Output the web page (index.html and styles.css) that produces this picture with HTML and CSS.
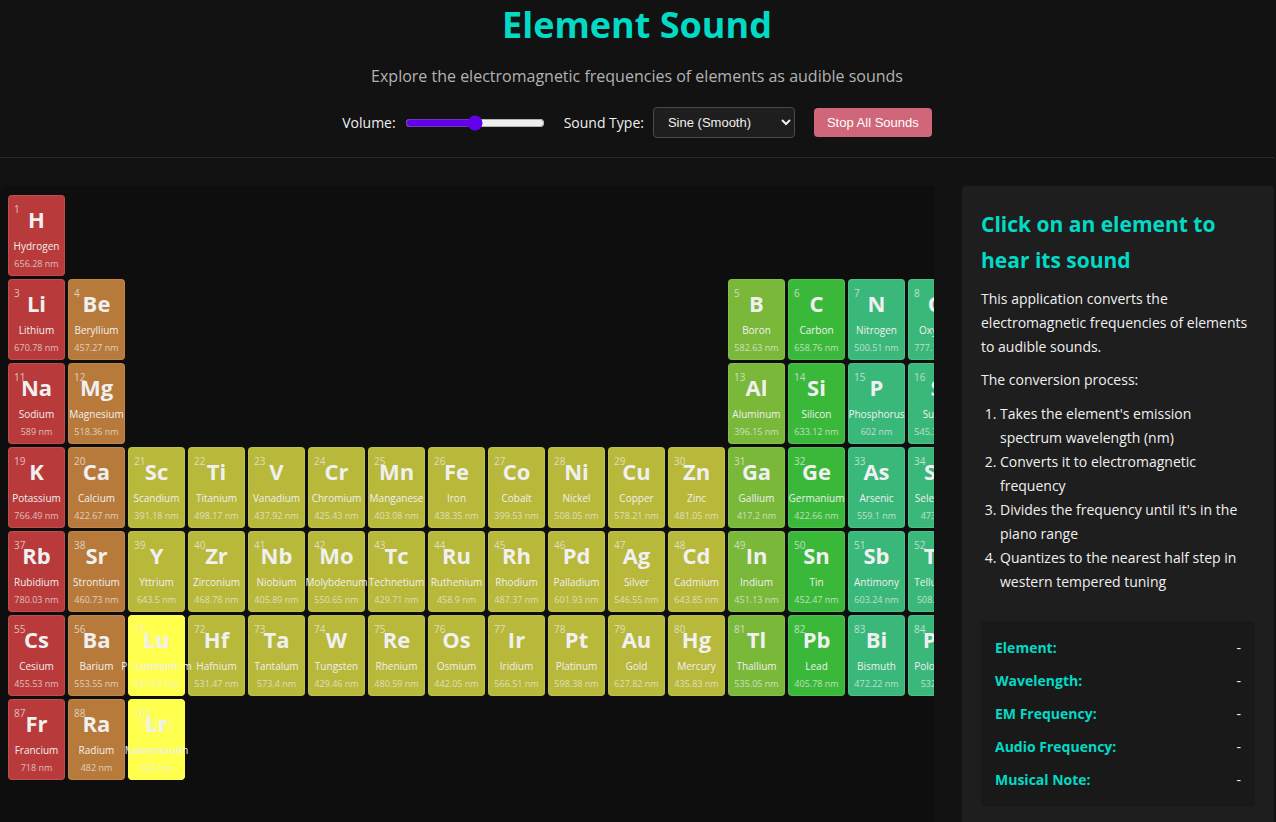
FILE: index.html
```html
<!DOCTYPE html>
<html lang="en">
<head>
<meta charset="utf-8">
<title>Element Sound</title>
<link rel="stylesheet" href="styles.css">
</head>
<body>
<header class="header">
  <h1 class="title">Element Sound</h1>
  <p class="subtitle">Explore the electromagnetic frequencies of elements as audible sounds</p>
  <div class="controls">
    <div class="control">
      <label for="volume">Volume:</label>
      <input class="volume" id="volume" type="range" min="0" max="100" value="50">
    </div>
    <div class="control">
      <label for="sound-type">Sound Type:</label>
      <select class="sound-type" id="sound-type"><option>Sine (Smooth)</option></select>
    </div>
    <button class="stop" type="button">Stop All Sounds</button>
  </div>
</header>
<main class="main">
  <section class="table-panel">
    <div class="elements" id="elements"></div>
  </section>
  <aside class="sidebar">
    <h2 class="sidebar-title">Click on an element to hear its sound</h2>
    <p class="text">This application converts the electromagnetic frequencies of elements to audible sounds.</p>
    <p class="text">The conversion process:</p>
    <ol class="steps">
      <li>Takes the element's emission spectrum wavelength (nm)</li>
      <li>Converts it to electromagnetic frequency</li>
      <li>Divides the frequency until it's in the piano range</li>
      <li>Quantizes to the nearest half step in western tempered tuning</li>
    </ol>
    <dl class="info">
      <div class="info-row"><dt>Element:</dt><dd>-</dd></div>
      <div class="info-row"><dt>Wavelength:</dt><dd>-</dd></div>
      <div class="info-row"><dt>EM Frequency:</dt><dd>-</dd></div>
      <div class="info-row"><dt>Audio Frequency:</dt><dd>-</dd></div>
      <div class="info-row"><dt>Musical Note:</dt><dd>-</dd></div>
    </dl>
  </aside>
</main>
<script src="script.js"></script>
</body>
</html>
```
FILE: styles.css
```css
* { box-sizing: border-box; }
body {
  margin: 0;
  min-height: 100vh;
  display: flex;
  flex-direction: column;
  padding-right: 2px;
  background: #121212;
  color: #f0f0f0;
  font: 14px/24px "Open Sans", "Noto Sans", sans-serif;
}
h1, h2, p, ol, dl, dd { margin: 0; }
.header {
  display: flex;
  flex-direction: column;
  align-items: center;
  padding-bottom: 19px;
  border-bottom: 1px solid #2b2b2b;
}
.title { color: #03dac6; font-size: 36px; line-height: 50px; }
.subtitle { margin: 13px 0 18px; font-size: 16px; line-height: 26px; color: #b3b3b3; }
.controls { display: flex; align-items: center; gap: 19px; }
.control { display: flex; align-items: center; gap: 9px; }
.volume { width: 140px; margin: 0; accent-color: #6200ee; }
.sound-type {
  width: 142px;
  height: 31px;
  padding: 0 0 0 10px;
  border: 1px solid #4a4a4a;
  border-radius: 4px;
  background: #1e1e1e;
  color: #f0f0f0;
  font: 13px "Liberation Sans", Arial, sans-serif;
}
.stop {
  height: 29px;
  padding: 0 13px;
  border: 0;
  border-radius: 4px;
  background: #cf6679;
  color: #fff;
  font: 13px "Liberation Sans", Arial, sans-serif;
}
.main { flex: 1; display: flex; gap: 28px; padding-top: 28px; }
.table-panel {
  flex: 1;
  min-width: 0;
  overflow: hidden;
  padding: 9px 8px;
  border-radius: 8px 0 0 0;
  background: #0e0e0e;
}
.elements {
  display: grid;
  grid-template-columns: repeat(18, 57px);
  grid-auto-rows: 81px;
  gap: 3px;
}
.cell {
  position: relative;
  display: flex;
  flex-direction: column;
  align-items: center;
  padding: 8px 0 0;
  border: 1px solid rgba(255, 255, 255, 0.1);
  border-radius: 4px;
  color: #f0f0f0;
  font: 10px/24px "Open Sans", "Noto Sans", sans-serif;
  white-space: nowrap;
  cursor: pointer;
}
.number { position: absolute; top: 4px; left: 5px; font-size: 10px; line-height: 18px; opacity: 0.7; }
.symbol { font-size: 22px; line-height: 30px; font-weight: 700; }
.wave { font-size: 9px; line-height: 12px; opacity: 0.7; }
.alkali { background-color: #b83a3a; }
.alkaline { background-color: #b87a3a; }
.transition { background-color: #b8b83a; }
.boron { background-color: #7ab83a; }
.carbon { background-color: #3ab83a; }
.nitrogen { background-color: #3ab87a; }
.series { background-color: rgba(255, 255, 77, 0.8); border-color: #ffff4d; }
.series-base { background-color: #ffff4d; border-color: #ffff4d; }
.sidebar {
  flex: 0 0 312px;
  padding: 20px 19px 15px;
  border-radius: 4px 4px 0 0;
  background: #1e1e1e;
}
.sidebar-title { margin-bottom: 9px; color: #03dac6; font-size: 21px; line-height: 36px; }
.text { margin-bottom: 9px; }
.steps { padding: 1px 0 0 19px; margin-bottom: 27px; }
.info {
  display: grid;
  gap: 9px;
  padding: 15px 14px;
  border-radius: 4px;
  background: #191919;
}
.info-row { display: flex; justify-content: space-between; }
.info-row dt { color: #03dac6; font-weight: 700; }
```
FILE: script.js
```js
const groups = {
  1: "alkali", 2: "alkaline", 13: "boron", 14: "carbon", 15: "nitrogen", 16: "nitrogen"
};

// row, column, atomic number, symbol, name, wavelength in nm, class
const elements = [
  [1, 1, 1, "H", "Hydrogen", "656.28"],
  [2, 1, 3, "Li", "Lithium", "670.78"],
  [2, 2, 4, "Be", "Beryllium", "457.27"],
  [2, 13, 5, "B", "Boron", "582.63"],
  [2, 14, 6, "C", "Carbon", "658.76"],
  [2, 15, 7, "N", "Nitrogen", "500.51"],
  [2, 16, 8, "O", "Oxygen", "777.19"],
  [3, 1, 11, "Na", "Sodium", "589"],
  [3, 2, 12, "Mg", "Magnesium", "518.36"],
  [3, 13, 13, "Al", "Aluminum", "396.15"],
  [3, 14, 14, "Si", "Silicon", "633.12"],
  [3, 15, 15, "P", "Phosphorus", "602"],
  [3, 16, 16, "S", "Sulfur", "545.38"],
  [4, 1, 19, "K", "Potassium", "766.49"],
  [4, 2, 20, "Ca", "Calcium", "422.67"],
  [4, 3, 21, "Sc", "Scandium", "391.18"],
  [4, 4, 22, "Ti", "Titanium", "498.17"],
  [4, 5, 23, "V", "Vanadium", "437.92"],
  [4, 6, 24, "Cr", "Chromium", "425.43"],
  [4, 7, 25, "Mn", "Manganese", "403.08"],
  [4, 8, 26, "Fe", "Iron", "438.35"],
  [4, 9, 27, "Co", "Cobalt", "399.53"],
  [4, 10, 28, "Ni", "Nickel", "508.05"],
  [4, 11, 29, "Cu", "Copper", "578.21"],
  [4, 12, 30, "Zn", "Zinc", "481.05"],
  [4, 13, 31, "Ga", "Gallium", "417.2"],
  [4, 14, 32, "Ge", "Germanium", "422.66"],
  [4, 15, 33, "As", "Arsenic", "559.1"],
  [4, 16, 34, "Se", "Selenium", "473"],
  [5, 1, 37, "Rb", "Rubidium", "780.03"],
  [5, 2, 38, "Sr", "Strontium", "460.73"],
  [5, 3, 39, "Y", "Yttrium", "643.5"],
  [5, 4, 40, "Zr", "Zirconium", "468.78"],
  [5, 5, 41, "Nb", "Niobium", "405.89"],
  [5, 6, 42, "Mo", "Molybdenum", "550.65"],
  [5, 7, 43, "Tc", "Technetium", "429.71"],
  [5, 8, 44, "Ru", "Ruthenium", "458.9"],
  [5, 9, 45, "Rh", "Rhodium", "487.37"],
  [5, 10, 46, "Pd", "Palladium", "601.93"],
  [5, 11, 47, "Ag", "Silver", "546.55"],
  [5, 12, 48, "Cd", "Cadmium", "643.85"],
  [5, 13, 49, "In", "Indium", "451.13"],
  [5, 14, 50, "Sn", "Tin", "452.47"],
  [5, 15, 51, "Sb", "Antimony", "603.24"],
  [5, 16, 52, "Te", "Tellurium", "508.1"],
  [6, 1, 55, "Cs", "Cesium", "455.53"],
  [6, 2, 56, "Ba", "Barium", "553.55"],
  [6, 4, 72, "Hf", "Hafnium", "531.47"],
  [6, 5, 73, "Ta", "Tantalum", "573.4"],
  [6, 6, 74, "W", "Tungsten", "429.46"],
  [6, 7, 75, "Re", "Rhenium", "480.59"],
  [6, 8, 76, "Os", "Osmium", "442.05"],
  [6, 9, 77, "Ir", "Iridium", "566.51"],
  [6, 10, 78, "Pt", "Platinum", "598.38"],
  [6, 11, 79, "Au", "Gold", "627.82"],
  [6, 12, 80, "Hg", "Mercury", "435.83"],
  [6, 13, 81, "Tl", "Thallium", "535.05"],
  [6, 14, 82, "Pb", "Lead", "405.78"],
  [6, 15, 83, "Bi", "Bismuth", "472.22"],
  [6, 16, 84, "Po", "Polonium", "532"],
  [7, 1, 87, "Fr", "Francium", "718"],
  [7, 2, 88, "Ra", "Radium", "482"],
  [6, 3, 59, "Pr", "Praseodymium", "417.94", "series-base"],
  [6, 3, 71, "Lu", "Lutetium", "547.67", "series"],
  [7, 3, 101, "Md", "Mendelevium", "622", "series-base"],
  [7, 3, 103, "Lr", "Lawrencium", "624", "series"]
];

const grid = document.getElementById("elements");
for (const [row, column, number, symbol, name, wave, kind] of elements) {
  const cell = document.createElement("button");
  cell.type = "button";
  cell.className = "cell " + (kind || groups[column] || "transition");
  cell.style.gridArea = row + " / " + column;
  const parts = { number, symbol, name, wave: wave + " nm" };
  for (const key in parts) {
    const part = document.createElement("span");
    part.className = key;
    part.textContent = parts[key];
    cell.append(part);
  }
  grid.append(cell);
}
```
